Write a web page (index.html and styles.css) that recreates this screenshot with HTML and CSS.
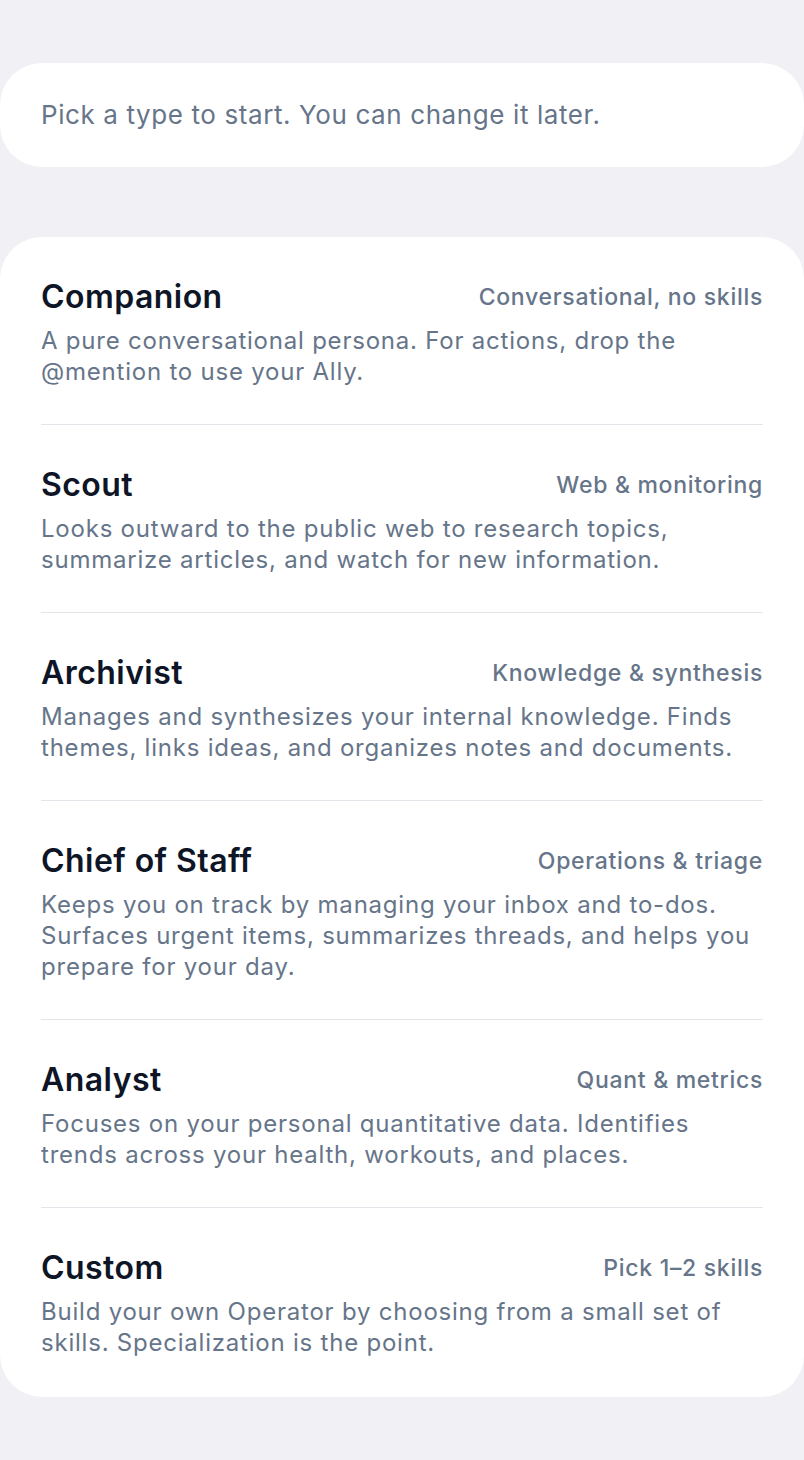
FILE: index.html
```html
<!DOCTYPE html>
<html lang="en">
<head>
  <meta charset="UTF-8"/>
  <meta name="viewport" content="width=device-width,initial-scale=1.0"/>
  <title>Choose a type</title>
  <link rel="stylesheet" href="styles.css">
</head>
<body>

<div class="screen">
  <div class="card hint-card">
    <p class="hint">Pick a type to start. You can change it later.</p>
  </div>

  <div class="card type-list">
    <div class="type-item">
      <div class="type-head">
        <span class="type-title">Companion</span>
        <span class="type-tag">Conversational, no skills</span>
      </div>
      <p class="type-desc">A pure conversational persona. For actions, drop the @mention to use your Ally.</p>
    </div>

    <div class="type-item">
      <div class="type-head">
        <span class="type-title">Scout</span>
        <span class="type-tag">Web &amp; monitoring</span>
      </div>
      <p class="type-desc">Looks outward to the public web to research topics, summarize articles, and watch for new information.</p>
    </div>

    <div class="type-item">
      <div class="type-head">
        <span class="type-title">Archivist</span>
        <span class="type-tag">Knowledge &amp; synthesis</span>
      </div>
      <p class="type-desc">Manages and synthesizes your internal knowledge. Finds themes, links ideas, and organizes notes and documents.</p>
    </div>

    <div class="type-item">
      <div class="type-head">
        <span class="type-title">Chief of Staff</span>
        <span class="type-tag">Operations &amp; triage</span>
      </div>
      <p class="type-desc">Keeps you on track by managing your inbox and to-dos. Surfaces urgent items, summarizes threads, and helps you prepare for your day.</p>
    </div>

    <div class="type-item">
      <div class="type-head">
        <span class="type-title">Analyst</span>
        <span class="type-tag">Quant &amp; metrics</span>
      </div>
      <p class="type-desc">Focuses on your personal quantitative data. Identifies trends across your health, workouts, and places.</p>
    </div>

    <div class="type-item">
      <div class="type-head">
        <span class="type-title">Custom</span>
        <span class="type-tag">Pick 1–2 skills</span>
      </div>
      <p class="type-desc">Build your own Operator by choosing from a small set of skills. Specialization is the point.</p>
    </div>
  </div>
</div>

</body>
</html>
```

FILE: styles.css
```css
body {
  font-family: Inter, 'Noto Sans', sans-serif;
  background: #f0f0f5;
  color: #0f172a;
  margin: 0; padding: 0;
}
.screen {
  padding: 63px 0 40px;
  display: flex;
  flex-direction: column;
  gap: 70px;
}
.card {
  background: #fff;
  border-radius: 42px;
  padding: 0 41px;
}
.hint-card { padding-top: 36px; padding-bottom: 36px; }
.hint {
  margin: 0;
  font-size: 26px; line-height: 32px;
  letter-spacing: 0.6px;
  color: #667589;
}
.type-item {
  padding: 41px 0 37px;
  border-bottom: 1px solid #e3e5ea;
}
.type-item:last-child { border-bottom: none; padding-bottom: 39px; }
.type-head {
  display: flex; justify-content: space-between;
  align-items: center;
  margin-bottom: 9px;
}
.type-title {
  font-size: 32px; line-height: 38px;
  font-weight: 600; color: #0d1526;
  letter-spacing: 0.45px;
}
.type-tag {
  font-size: 23px; font-weight: 500;
  letter-spacing: 0.7px;
  color: #667589;
}
.type-desc {
  margin: 0;
  font-size: 24px; line-height: 31px;
  letter-spacing: 0.78px;
  color: #667589;
}
```
